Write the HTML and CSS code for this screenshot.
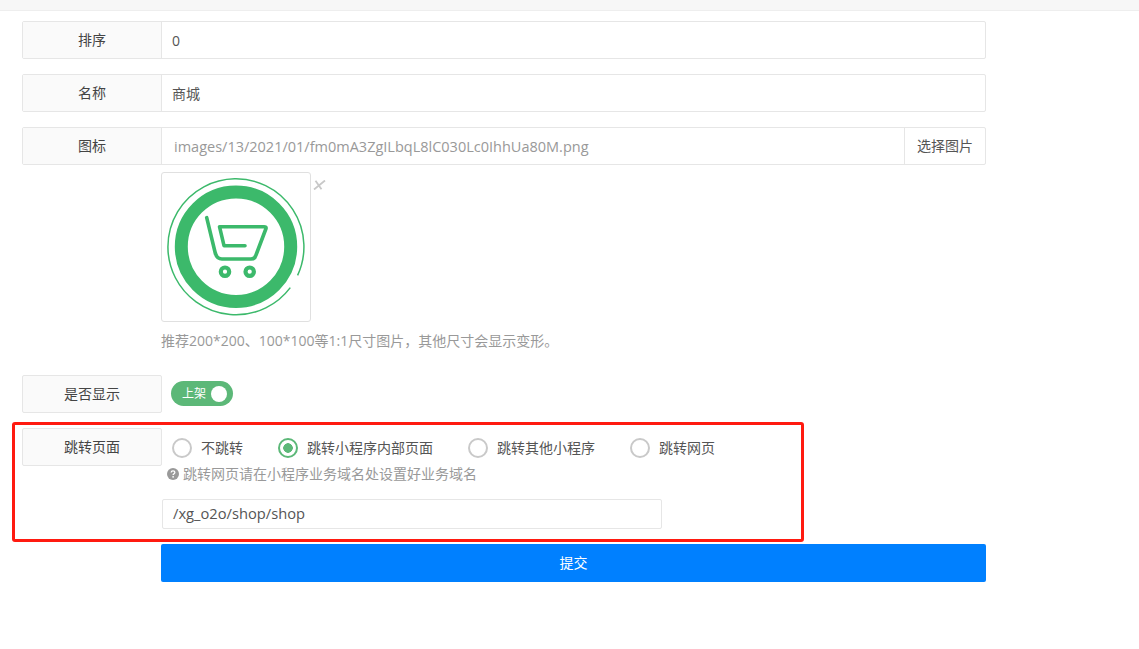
FILE: index.html
```html
<!DOCTYPE html>
<html lang="zh">
<head>
<meta charset="utf-8">
<title>表单</title>
<link rel="stylesheet" href="styles.css">
</head>
<body>
<div class="topbar"></div>
<form class="form">
  <div class="group">
    <div class="label">排序</div>
    <div class="field">0</div>
  </div>
  <div class="group">
    <div class="label">名称</div>
    <div class="field">商城</div>
  </div>
  <div class="group group-tight">
    <div class="label">图标</div>
    <div class="field field-muted">images/13/2021/01/fm0mA3ZgILbqL8lC030Lc0IhhUa80M.png</div>
    <div class="addon">选择图片</div>
  </div>
  <div class="preview-row">
    <div class="preview">
      <svg class="logo" width="148" height="148" viewBox="1 1 148 148" fill="none" stroke="#3cb96b">
        <path d="M129.3 115.6A68 68 0 1 1 136.6 103.4" stroke-width="1.5"/>
        <circle cx="75" cy="74.7" r="54.7" stroke-width="13"/>
        <path d="M45.7 45.7L54 80Q55.5 87 61 87H90Q94 87 95 83L105 56.5Q105.5 54.7 103 54.7H58.5L63 73.7H84" stroke-width="3.6" stroke-linecap="round" stroke-linejoin="round"/>
        <circle cx="64" cy="99.7" r="4.2" stroke-width="4.2"/>
        <circle cx="88.7" cy="99.7" r="4.2" stroke-width="4.2"/>
      </svg>
    </div>
    <svg class="close" width="13" height="10" viewBox="0 0 13 10" fill="none" stroke="#c8c8c8" stroke-width="1.8"><path d="M1 9.5L12 .5M2.5 .8L8.5 9.2"/></svg>
  </div>
  <p class="hint">推荐200*200、100*100等1:1尺寸图片，其他尺寸会显示变形。</p>
  <div class="group group-plain">
    <div class="label">是否显示</div>
    <div class="switch-wrap">
      <div class="switch"><span>上架</span><i class="knob"></i></div>
    </div>
  </div>
  <div class="group group-plain group-jump">
    <div class="label">跳转页面</div>
    <div class="jump">
      <div class="radios">
        <div class="radio"><i class="dot"></i>不跳转</div>
        <div class="radio radio-on"><i class="dot"></i>跳转小程序内部页面</div>
        <div class="radio"><i class="dot"></i>跳转其他小程序</div>
        <div class="radio"><i class="dot"></i>跳转网页</div>
      </div>
      <div class="help">
        <svg width="12" height="12" viewBox="0 0 11 11"><circle cx="5.5" cy="5.5" r="5.5" fill="#999"/><path d="M3.8 4.2Q3.9 2.6 5.5 2.6Q7.2 2.6 7.2 4Q7.2 4.9 6.3 5.3Q5.6 5.6 5.6 6.4" fill="none" stroke="#fff" stroke-width="1.2"/><circle cx="5.6" cy="8.1" r=".8" fill="#fff"/></svg>
        <span>跳转网页请在小程序业务域名处设置好业务域名</span>
      </div>
      <div class="url">/xg_o2o/shop/shop</div>
    </div>
  </div>
  <div class="submit">提交</div>
</form>
<div class="highlight"></div>
</body>
</html>
```
FILE: styles.css
```css
* { box-sizing: border-box; }
html, body { margin: 0; padding: 0; }
body {
  position: relative;
  height: 649px;
  overflow: hidden;
  background: #fff;
  color: #555;
  font: 14px/20px "Open Sans", "Noto Sans CJK SC", sans-serif;
}
.topbar {
  height: 11px;
  background: #f7f7f7;
  border-bottom: 1px solid #eee;
}
.form {
  width: 964px;
  margin-left: 22px;
  padding-top: 10px;
}
.group {
  display: flex;
  height: 38px;
  margin-bottom: 15px;
  border: 1px solid #e6e6e6;
  border-radius: 2px;
}
.group-tight { margin-bottom: 7px; }
.group-plain { border: 0; height: auto; }
.label {
  flex: none;
  width: 139px;
  height: 36px;
  display: flex;
  align-items: center;
  justify-content: center;
  background: #fafafa;
  border-right: 1px solid #e6e6e6;
  color: #444;
}
.group-plain .label {
  width: 140px;
  height: 38px;
  border: 1px solid #e6e6e6;
  border-radius: 2px;
}
.field {
  flex: 1;
  display: flex;
  align-items: center;
  padding-left: 10px;
  padding-top: 2px;
  color: #555;
}
.field-muted {
  padding-left: 12px;
  color: #999;
  font-size: 14.5px;
}
.addon {
  flex: none;
  width: 81px;
  display: flex;
  align-items: center;
  justify-content: center;
  border-left: 1px solid #e6e6e6;
  color: #555;
}
.preview-row {
  display: flex;
  align-items: flex-start;
  margin-left: 139px;
}
.preview {
  width: 150px;
  height: 150px;
  border: 1px solid #e0e0e0;
  border-radius: 3px;
}
.logo { display: block; }
.close { margin: 8px 0 0 2px; }
.hint {
  margin: 9px 0 24px 139px;
  color: #999;
}
.switch-wrap { padding: 6px 0 0 9px; }
.switch {
  width: 62px;
  height: 25px;
  display: flex;
  align-items: center;
  padding-left: 11px;
  border-radius: 13px;
  background: #5cb878;
  color: #fff;
  font-size: 12px;
}
.knob {
  width: 16px;
  height: 16px;
  margin-left: 5px;
  border-radius: 50%;
  background: #fff;
}
.group-jump { margin-bottom: 15px; }
.jump { flex: none; }
.radios {
  display: flex;
  gap: 35px;
  padding: 10px 0 0 10px;
}
.radio {
  display: flex;
  align-items: center;
  gap: 9px;
  height: 20px;
  color: #555;
}
.dot {
  width: 20px;
  height: 20px;
  border: 2px solid #c9c9c9;
  border-radius: 50%;
  background: #fff;
}
.radio-on .dot {
  border-color: #5cb878;
  background: radial-gradient(circle, #5cb878 0 4.5px, #fff 5px);
}
.help {
  display: flex;
  align-items: center;
  gap: 4px;
  height: 20px;
  margin: 6px 0 15px 5px;
  color: #999;
}
.url {
  width: 500px;
  height: 30px;
  display: flex;
  align-items: center;
  padding: 0 0 2px 10px;
  border: 1px solid #e6e6e6;
  border-radius: 2px;
  color: #555;
  font-size: 14.7px;
}
.submit {
  width: 825px;
  height: 38px;
  margin-left: 139px;
  display: flex;
  align-items: center;
  justify-content: center;
  background: #0080ff;
  border-radius: 2px;
  color: #fff;
}
.highlight {
  position: absolute;
  left: 12px;
  top: 422px;
  width: 792px;
  height: 120px;
  border: 3px solid #ff1a10;
  border-radius: 3px;
}
```
